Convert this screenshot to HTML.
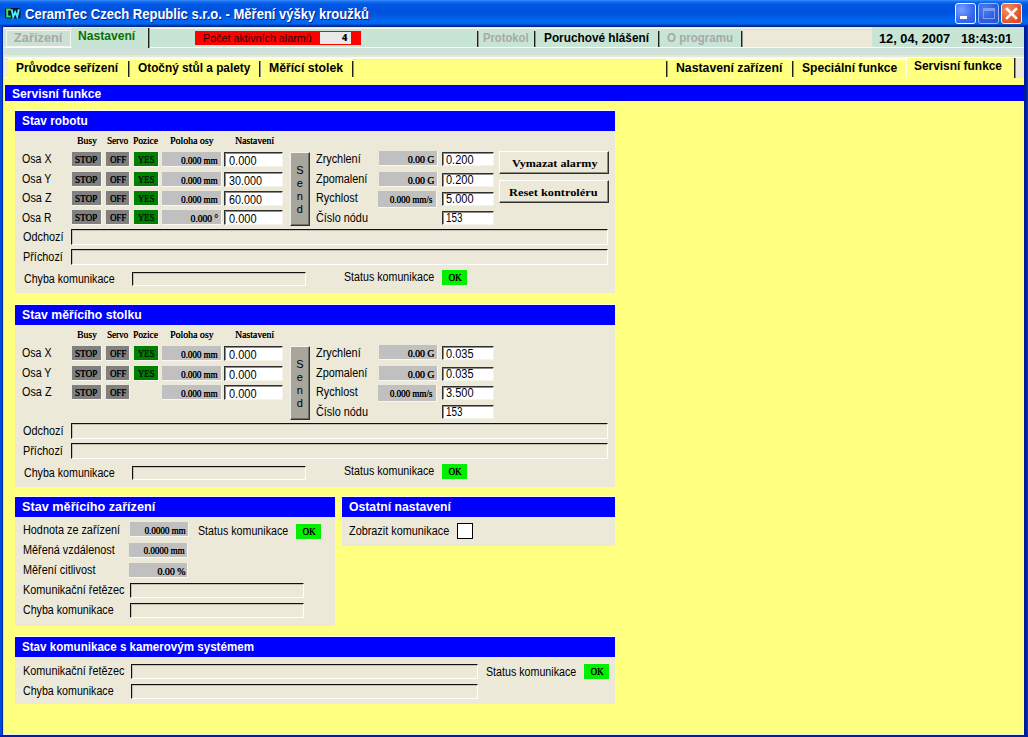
<!DOCTYPE html>
<html><head><meta charset="utf-8"><style>
html,body{margin:0;padding:0;}
body{width:1028px;height:737px;overflow:hidden;position:relative;font-family:"Liberation Sans",sans-serif;}
body>div,body>svg{position:absolute;}
.t{white-space:nowrap;}
</style></head><body>
<div style="left:0px;top:0px;width:1028px;height:737px;background:#0047D8;"></div>
<div style="left:0px;top:0px;width:1028px;height:27px;background:linear-gradient(#3A90FF 0px,#1A70F0 1.5px,#0058E4 4px,#0052DC 10px,#0054DE 14px,#0062EC 18px,#0068F4 21px,#0064F0 24px,#0044B8 25px,#00288C 26.5px,#00288C 27px);"></div>
<div style="left:0px;top:26px;width:2px;height:711px;background:#0048E0;"></div>
<div style="left:2px;top:26px;width:1px;height:711px;background:#0028A8;"></div>
<div style="left:3px;top:27px;width:1px;height:708px;background:#C8E4FF;"></div>
<div style="left:1024px;top:26px;width:4px;height:711px;background:#001C9C;"></div>
<div style="left:1027px;top:26px;width:1px;height:711px;background:#0838C0;"></div>
<div style="left:0px;top:735px;width:1028px;height:2px;background:#00209C;"></div>
<svg style="left:4px;top:7px;width:18px;height:13px" viewBox="4 7 18 13"><rect x="5" y="8" width="15.5" height="10.5" rx="2" fill="#00103A"/><path d="M10.8 9.6 H7.2 V16.6 H10.8" fill="none" stroke="#38E848" stroke-width="2"/><path d="M11.6 9.2 L13.2 16.8 L15.2 12.2 L17.2 16.8 L18.9 9.2" fill="none" stroke="#48F0F0" stroke-width="1.9"/></svg>
<div class="t" style="top:7.00px;font:bold 14px/14px 'Liberation Sans', sans-serif;color:#FFFFFF;left:25px;transform-origin:0 0;transform:scaleX(0.9314);text-shadow:1px 1px 0 #0A1E8C;">CeramTec Czech Republic s.r.o. - Měření výšky kroužků</div>
<div style="left:955px;top:3px;width:19px;height:19px;border:1px solid #F0F4FF;border-radius:3px;background:radial-gradient(circle at 30% 30%, #7AA0FF, #3868F0 60%, #2A58E4);"></div>
<div style="left:978px;top:3px;width:19px;height:19px;border:1px solid #9CB8F4;border-radius:3px;background:radial-gradient(circle at 30% 30%, #4C7EF0, #2E5BE0 60%, #2450D8);"></div>
<div style="left:1001px;top:3px;width:19px;height:19px;border:1px solid #F0F4FF;border-radius:3px;background:radial-gradient(circle at 30% 30%, #F0906A, #E5582E 60%, #D04010);"></div>
<div style="left:960px;top:16px;width:7px;height:3px;background:#fff;"></div>
<div style="left:983px;top:8px;width:12px;height:11px;border:1px solid #7BA0F0;border-top:3px solid #7BA0F0;box-sizing:border-box;"></div>
<svg style="left:1001px;top:3px;width:21px;height:21px" viewBox="0 0 21 21"><path d="M6 6 L15 15 M15 6 L6 15" stroke="#FFF" stroke-width="2.5" stroke-linecap="square"/></svg>
<div style="left:4px;top:27px;width:1020px;height:708px;background:#FFFF80;"></div>
<div style="left:4px;top:734px;width:1020px;height:1px;background:#E8F4F0;"></div>
<div style="left:1023px;top:102px;width:1px;height:633px;background:#F0F8E8;"></div>
<div style="left:4px;top:27px;width:1020px;height:31px;background:#C8E4D4;"></div>
<div style="left:4px;top:27px;width:1020px;height:1px;background:#E4E8F4;"></div>
<div style="left:4px;top:28px;width:1020px;height:1px;background:#F6F6F0;"></div>
<div style="left:4px;top:47px;width:1020px;height:1px;background:#F4FFF8;"></div>
<div style="left:4px;top:48px;width:1020px;height:5px;background:#D0E0DA;"></div>
<div style="left:4px;top:53px;width:1020px;height:2px;background:#CCE4D0;"></div>
<div style="left:4px;top:55px;width:1020px;height:2px;background:#E4EAD8;"></div>
<div style="left:4px;top:57px;width:1020px;height:2px;background:#FAFAEE;"></div>
<div style="left:6px;top:30px;width:65px;height:17px;border:1px solid #F4F8F0;box-sizing:border-box;background:#CCE0D4;"></div>
<div class="t" style="top:32.00px;font:bold 12px/12px 'Liberation Sans', sans-serif;color:#A8A8A8;left:13.8px;transform-origin:0 0;transform:scaleX(1.0670);">Zařízení</div>
<div style="left:72px;top:28px;width:77px;height:20px;background:#C8E4D4;"></div>
<div style="left:148px;top:28px;width:1px;height:20px;background:#202020;"></div>
<div style="left:149px;top:28px;width:1px;height:20px;background:#909090;"></div>
<div class="t" style="top:30.00px;font:bold 12px/12px 'Liberation Sans', sans-serif;color:#0A700A;left:78.4px;transform-origin:0 0;transform:scaleX(1.0088);">Nastavení</div>
<div style="left:195px;top:31px;width:166px;height:14px;background:#FF0000;"></div>
<div class="t" style="top:33.00px;font:11px/11px 'Liberation Sans', sans-serif;color:#300000;left:202.6px;transform-origin:0 0;transform:scaleX(0.9768);">Počet aktivních alarmů</div>
<div style="left:320px;top:32px;width:31px;height:12px;background:#E8E8E8;"></div>
<div class="t" style="top:33.00px;font:bold 10px/10px 'Liberation Serif', serif;color:#000;right:681px;transform-origin:100% 0;text-shadow:0.3px 0 0 #000;">4</div>
<div style="left:477px;top:31px;width:1px;height:16px;background:#202020;"></div>
<div style="left:478px;top:31px;width:1px;height:16px;background:#909090;"></div>
<div style="left:534px;top:31px;width:1px;height:16px;background:#202020;"></div>
<div style="left:535px;top:31px;width:1px;height:16px;background:#909090;"></div>
<div style="left:658px;top:31px;width:1px;height:16px;background:#202020;"></div>
<div style="left:659px;top:31px;width:1px;height:16px;background:#909090;"></div>
<div style="left:741px;top:31px;width:1px;height:16px;background:#202020;"></div>
<div style="left:742px;top:31px;width:1px;height:16px;background:#909090;"></div>
<div class="t" style="top:32.00px;font:bold 12px/12px 'Liberation Sans', sans-serif;color:#A8A8A8;left:483px;transform-origin:0 0;transform:scaleX(0.9348);">Protokol</div>
<div class="t" style="top:32.00px;font:bold 12px/12px 'Liberation Sans', sans-serif;color:#000;left:544px;transform-origin:0 0;transform:scaleX(0.9840);">Poruchové hlášení</div>
<div class="t" style="top:32.00px;font:bold 12px/12px 'Liberation Sans', sans-serif;color:#A8A8A8;left:667px;transform-origin:0 0;transform:scaleX(0.9611);">O programu</div>
<div style="left:743px;top:30px;width:129px;height:17px;background:#ECE9D8;"></div>
<div style="left:872px;top:27px;width:152px;height:20px;background:#C8E4D4;"></div>
<div class="t" style="top:33.00px;font:bold 12px/12px 'Liberation Sans', sans-serif;color:#000;left:878.8px;transform-origin:0 0;transform:scaleX(1.0676);">12, 04, 2007   18:43:01</div>
<div style="left:4px;top:59px;width:1020px;height:26px;background:#FFFF80;"></div>
<div style="left:4px;top:58px;width:4px;height:19px;background:#F0F0DC;"></div>
<div style="left:1016px;top:58px;width:8px;height:20px;background:#ECE9D8;"></div>
<div style="left:128px;top:61px;width:1px;height:17px;background:#202020;"></div>
<div style="left:129px;top:61px;width:1px;height:17px;background:#909090;"></div>
<div style="left:259px;top:61px;width:1px;height:17px;background:#202020;"></div>
<div style="left:260px;top:61px;width:1px;height:17px;background:#909090;"></div>
<div style="left:352px;top:61px;width:1px;height:17px;background:#202020;"></div>
<div style="left:353px;top:61px;width:1px;height:17px;background:#909090;"></div>
<div style="left:666px;top:61px;width:1px;height:17px;background:#202020;"></div>
<div style="left:667px;top:61px;width:1px;height:17px;background:#909090;"></div>
<div style="left:792px;top:61px;width:1px;height:17px;background:#202020;"></div>
<div style="left:793px;top:61px;width:1px;height:17px;background:#909090;"></div>
<div style="left:4px;top:59px;width:1020px;height:1px;background:#F0EAB8;"></div>
<div style="left:8px;top:59px;width:344px;height:1px;background:#FFFFE8;"></div>
<div style="left:666px;top:59px;width:350px;height:1px;background:#FFFFE8;"></div>
<div style="left:906px;top:57px;width:109px;height:21px;background:#FFFF80;border-left:1px solid #FFFFF0;border-top:1px solid #FFFFF0;box-sizing:border-box;"></div>
<div style="left:1014px;top:58px;width:1px;height:20px;background:#202020;"></div>
<div style="left:1015px;top:58px;width:1px;height:20px;background:#909090;"></div>
<div style="left:4px;top:77px;width:902px;height:1px;background:#FFFFE0;"></div>
<div class="t" style="top:62.00px;font:bold 12px/12px 'Liberation Sans', sans-serif;color:#000;left:15.7px;transform-origin:0 0;transform:scaleX(0.9930);">Průvodce seřízení</div>
<div class="t" style="top:62.00px;font:bold 12px/12px 'Liberation Sans', sans-serif;color:#000;left:137.7px;transform-origin:0 0;transform:scaleX(0.9848);">Otočný stůl a palety</div>
<div class="t" style="top:62.00px;font:bold 12px/12px 'Liberation Sans', sans-serif;color:#000;left:269px;transform-origin:0 0;transform:scaleX(1.0178);">Měřící stolek</div>
<div class="t" style="top:62.00px;font:bold 12px/12px 'Liberation Sans', sans-serif;color:#000;left:675.7px;transform-origin:0 0;transform:scaleX(1.0217);">Nastavení zařízení</div>
<div class="t" style="top:62.00px;font:bold 12px/12px 'Liberation Sans', sans-serif;color:#000;left:801.7px;transform-origin:0 0;transform:scaleX(1.0063);">Speciální funkce</div>
<div class="t" style="top:60.00px;font:bold 12px/12px 'Liberation Sans', sans-serif;color:#000;left:914px;transform-origin:0 0;transform:scaleX(0.9919);">Servisní funkce</div>
<div style="left:5px;top:85px;width:1019px;height:16px;background:#0000FF;"></div>
<div style="left:5px;top:101px;width:1019px;height:1px;background:#F0F0FF;"></div>
<div class="t" style="top:88.00px;font:bold 12px/12px 'Liberation Sans', sans-serif;color:#FFF;left:11.8px;transform-origin:0 0;transform:scaleX(1.0054);">Servisní funkce</div>
<div style="left:15px;top:110px;width:601px;height:1px;background:#FFFFF0;"></div>
<div style="left:15px;top:111px;width:600px;height:182px;background:#ECE9D8;"></div>
<div style="left:15px;top:111px;width:600px;height:20px;background:#0000FF;"></div>
<div style="left:15px;top:131px;width:600px;height:1px;background:#E8E8F8;"></div>
<div class="t" style="top:115.00px;font:bold 12px/12px 'Liberation Sans', sans-serif;color:#FFF;left:21.7px;transform-origin:0 0;transform:scaleX(0.9839);">Stav robotu</div>
<div class="t" style="top:136.00px;font:10px/10px 'Liberation Serif', serif;color:#000;left:77.2px;transform-origin:0 0;transform:scaleX(0.9629);text-shadow:0.2px 0 0 #000;">Busy</div>
<div class="t" style="top:136.00px;font:10px/10px 'Liberation Serif', serif;color:#000;left:106.5px;transform-origin:0 0;transform:scaleX(0.9039);text-shadow:0.2px 0 0 #000;">Servo</div>
<div class="t" style="top:136.00px;font:10px/10px 'Liberation Serif', serif;color:#000;left:133.2px;transform-origin:0 0;transform:scaleX(0.9341);text-shadow:0.2px 0 0 #000;">Pozice</div>
<div class="t" style="top:136.00px;font:10px/10px 'Liberation Serif', serif;color:#000;left:170px;transform-origin:0 0;transform:scaleX(0.9848);text-shadow:0.2px 0 0 #000;">Poloha osy</div>
<div class="t" style="top:136.00px;font:10px/10px 'Liberation Serif', serif;color:#000;left:235px;transform-origin:0 0;transform:scaleX(0.9750);text-shadow:0.2px 0 0 #000;">Nastavení</div>
<div class="t" style="top:153.00px;font:12px/12px 'Liberation Sans', sans-serif;color:#000;left:22.4px;transform-origin:0 0;transform:scaleX(0.8843);">Osa X</div>
<div style="left:72px;top:152px;width:30px;height:15px;background:#808080;border-right:1px solid #F8F8F0;border-bottom:1px solid #F8F8F0;box-sizing:border-box;"></div>
<div class="t" style="top:155.00px;font:10px/10px 'Liberation Serif', serif;color:#000;left:86.2px;transform-origin:50% 0;transform:scaleX(0.9184);width:0;display:flex;justify-content:center;text-shadow:0.35px 0 0 #000;">STOP</div>
<div style="left:106px;top:152px;width:24px;height:15px;background:#808080;border-right:1px solid #F8F8F0;border-bottom:1px solid #F8F8F0;box-sizing:border-box;"></div>
<div class="t" style="top:155.00px;font:10px/10px 'Liberation Serif', serif;color:#000;left:118px;transform-origin:50% 0;transform:scaleX(0.8824);width:0;display:flex;justify-content:center;text-shadow:0.35px 0 0 #000;">OFF</div>
<div style="left:134px;top:152px;width:25px;height:15px;background:#008000;border-right:1px solid #F8F8F0;border-bottom:1px solid #F8F8F0;box-sizing:border-box;"></div>
<div class="t" style="top:155.00px;font:10px/10px 'Liberation Serif', serif;color:#002000;left:146.1px;transform-origin:50% 0;transform:scaleX(0.8780);width:0;display:flex;justify-content:center;text-shadow:0.35px 0 0 #000;">YES</div>
<div style="left:162px;top:152px;width:60px;height:15px;background:#C0C0C0;border-right:1px solid #F8F8F0;border-bottom:1px solid #F8F8F0;box-sizing:border-box;"></div>
<div class="t" style="top:156.00px;font:10px/10px 'Liberation Serif', serif;color:#000;right:810.5px;transform-origin:100% 0;transform:scaleX(0.8998);text-shadow:0.3px 0 0 #000;">0.000 mm</div>
<div style="left:224px;top:152px;width:59px;height:15px;background:#FFF;border-top:1px solid #303030;border-left:1px solid #303030;border-right:1px solid #F4F4EC;border-bottom:1px solid #F4F4EC;box-sizing:border-box;box-shadow:inset 1px 1px 0 #8C8C8C;"></div>
<div class="t" style="top:155.00px;font:12px/12px 'Liberation Sans', sans-serif;color:#000;left:228.5px;transform-origin:0 0;transform:scaleX(0.9157);">0.000</div>
<div class="t" style="top:173.00px;font:12px/12px 'Liberation Sans', sans-serif;color:#000;left:22.4px;transform-origin:0 0;transform:scaleX(0.8901);">Osa Y</div>
<div style="left:72px;top:172px;width:30px;height:15px;background:#808080;border-right:1px solid #F8F8F0;border-bottom:1px solid #F8F8F0;box-sizing:border-box;"></div>
<div class="t" style="top:175.00px;font:10px/10px 'Liberation Serif', serif;color:#000;left:86.2px;transform-origin:50% 0;transform:scaleX(0.9184);width:0;display:flex;justify-content:center;text-shadow:0.35px 0 0 #000;">STOP</div>
<div style="left:106px;top:172px;width:24px;height:15px;background:#808080;border-right:1px solid #F8F8F0;border-bottom:1px solid #F8F8F0;box-sizing:border-box;"></div>
<div class="t" style="top:175.00px;font:10px/10px 'Liberation Serif', serif;color:#000;left:118px;transform-origin:50% 0;transform:scaleX(0.8824);width:0;display:flex;justify-content:center;text-shadow:0.35px 0 0 #000;">OFF</div>
<div style="left:134px;top:172px;width:25px;height:15px;background:#008000;border-right:1px solid #F8F8F0;border-bottom:1px solid #F8F8F0;box-sizing:border-box;"></div>
<div class="t" style="top:175.00px;font:10px/10px 'Liberation Serif', serif;color:#002000;left:146.1px;transform-origin:50% 0;transform:scaleX(0.8780);width:0;display:flex;justify-content:center;text-shadow:0.35px 0 0 #000;">YES</div>
<div style="left:162px;top:172px;width:60px;height:15px;background:#C0C0C0;border-right:1px solid #F8F8F0;border-bottom:1px solid #F8F8F0;box-sizing:border-box;"></div>
<div class="t" style="top:176.00px;font:10px/10px 'Liberation Serif', serif;color:#000;right:810.5px;transform-origin:100% 0;transform:scaleX(0.8998);text-shadow:0.3px 0 0 #000;">0.000 mm</div>
<div style="left:224px;top:172px;width:59px;height:15px;background:#FFF;border-top:1px solid #303030;border-left:1px solid #303030;border-right:1px solid #F4F4EC;border-bottom:1px solid #F4F4EC;box-sizing:border-box;box-shadow:inset 1px 1px 0 #8C8C8C;"></div>
<div class="t" style="top:175.00px;font:12px/12px 'Liberation Sans', sans-serif;color:#000;left:228.5px;transform-origin:0 0;transform:scaleX(0.8991);">30.000</div>
<div class="t" style="top:192.00px;font:12px/12px 'Liberation Sans', sans-serif;color:#000;left:22.4px;transform-origin:0 0;transform:scaleX(0.9029);">Osa Z</div>
<div style="left:72px;top:191px;width:30px;height:15px;background:#808080;border-right:1px solid #F8F8F0;border-bottom:1px solid #F8F8F0;box-sizing:border-box;"></div>
<div class="t" style="top:194.00px;font:10px/10px 'Liberation Serif', serif;color:#000;left:86.2px;transform-origin:50% 0;transform:scaleX(0.9184);width:0;display:flex;justify-content:center;text-shadow:0.35px 0 0 #000;">STOP</div>
<div style="left:106px;top:191px;width:24px;height:15px;background:#808080;border-right:1px solid #F8F8F0;border-bottom:1px solid #F8F8F0;box-sizing:border-box;"></div>
<div class="t" style="top:194.00px;font:10px/10px 'Liberation Serif', serif;color:#000;left:118px;transform-origin:50% 0;transform:scaleX(0.8824);width:0;display:flex;justify-content:center;text-shadow:0.35px 0 0 #000;">OFF</div>
<div style="left:134px;top:191px;width:25px;height:15px;background:#008000;border-right:1px solid #F8F8F0;border-bottom:1px solid #F8F8F0;box-sizing:border-box;"></div>
<div class="t" style="top:194.00px;font:10px/10px 'Liberation Serif', serif;color:#002000;left:146.1px;transform-origin:50% 0;transform:scaleX(0.8780);width:0;display:flex;justify-content:center;text-shadow:0.35px 0 0 #000;">YES</div>
<div style="left:162px;top:191px;width:60px;height:15px;background:#C0C0C0;border-right:1px solid #F8F8F0;border-bottom:1px solid #F8F8F0;box-sizing:border-box;"></div>
<div class="t" style="top:195.00px;font:10px/10px 'Liberation Serif', serif;color:#000;right:810.5px;transform-origin:100% 0;transform:scaleX(0.8998);text-shadow:0.3px 0 0 #000;">0.000 mm</div>
<div style="left:224px;top:191px;width:59px;height:15px;background:#FFF;border-top:1px solid #303030;border-left:1px solid #303030;border-right:1px solid #F4F4EC;border-bottom:1px solid #F4F4EC;box-sizing:border-box;box-shadow:inset 1px 1px 0 #8C8C8C;"></div>
<div class="t" style="top:194.00px;font:12px/12px 'Liberation Sans', sans-serif;color:#000;left:228.5px;transform-origin:0 0;transform:scaleX(0.8991);">60.000</div>
<div class="t" style="top:212.00px;font:12px/12px 'Liberation Sans', sans-serif;color:#000;left:22.4px;transform-origin:0 0;transform:scaleX(0.8672);">Osa R</div>
<div style="left:72px;top:210px;width:30px;height:15px;background:#808080;border-right:1px solid #F8F8F0;border-bottom:1px solid #F8F8F0;box-sizing:border-box;"></div>
<div class="t" style="top:213.00px;font:10px/10px 'Liberation Serif', serif;color:#000;left:86.2px;transform-origin:50% 0;transform:scaleX(0.9184);width:0;display:flex;justify-content:center;text-shadow:0.35px 0 0 #000;">STOP</div>
<div style="left:106px;top:210px;width:24px;height:15px;background:#808080;border-right:1px solid #F8F8F0;border-bottom:1px solid #F8F8F0;box-sizing:border-box;"></div>
<div class="t" style="top:213.00px;font:10px/10px 'Liberation Serif', serif;color:#000;left:118px;transform-origin:50% 0;transform:scaleX(0.8824);width:0;display:flex;justify-content:center;text-shadow:0.35px 0 0 #000;">OFF</div>
<div style="left:134px;top:210px;width:25px;height:15px;background:#008000;border-right:1px solid #F8F8F0;border-bottom:1px solid #F8F8F0;box-sizing:border-box;"></div>
<div class="t" style="top:213.00px;font:10px/10px 'Liberation Serif', serif;color:#002000;left:146.1px;transform-origin:50% 0;transform:scaleX(0.8780);width:0;display:flex;justify-content:center;text-shadow:0.35px 0 0 #000;">YES</div>
<div style="left:162px;top:210px;width:60px;height:15px;background:#C0C0C0;border-right:1px solid #F8F8F0;border-bottom:1px solid #F8F8F0;box-sizing:border-box;"></div>
<div class="t" style="top:214.00px;font:10px/10px 'Liberation Serif', serif;color:#000;right:810.5px;transform-origin:100% 0;transform:scaleX(0.9483);text-shadow:0.3px 0 0 #000;">0.000 °</div>
<div style="left:224px;top:210px;width:59px;height:15px;background:#FFF;border-top:1px solid #303030;border-left:1px solid #303030;border-right:1px solid #F4F4EC;border-bottom:1px solid #F4F4EC;box-sizing:border-box;box-shadow:inset 1px 1px 0 #8C8C8C;"></div>
<div class="t" style="top:213.00px;font:12px/12px 'Liberation Sans', sans-serif;color:#000;left:228.5px;transform-origin:0 0;transform:scaleX(0.9157);">0.000</div>
<div style="left:290px;top:152px;width:20px;height:74px;background:#A8A69C;border-top:1px solid #F4F4F0;border-left:1px solid #F4F4F0;border-right:1px solid #303030;border-bottom:1px solid #303030;box-sizing:border-box;box-shadow:inset -1px -1px 0 #707068;"></div>
<div class="t" style="top:165.00px;font:11px/11px 'Liberation Sans', sans-serif;color:#000;left:299.8px;transform-origin:50% 0;width:0;display:flex;justify-content:center;">S</div>
<div class="t" style="top:178.00px;font:11px/11px 'Liberation Sans', sans-serif;color:#000;left:299.8px;transform-origin:50% 0;width:0;display:flex;justify-content:center;">e</div>
<div class="t" style="top:191.00px;font:11px/11px 'Liberation Sans', sans-serif;color:#000;left:299.8px;transform-origin:50% 0;width:0;display:flex;justify-content:center;">n</div>
<div class="t" style="top:204.00px;font:11px/11px 'Liberation Sans', sans-serif;color:#000;left:299.8px;transform-origin:50% 0;width:0;display:flex;justify-content:center;">d</div>
<div class="t" style="top:153.00px;font:12px/12px 'Liberation Sans', sans-serif;color:#000;left:315.8px;transform-origin:0 0;transform:scaleX(0.905);">Zrychlení</div>
<div style="left:379px;top:151px;width:59px;height:15px;background:#C0C0C0;border-right:1px solid #F8F8F0;border-bottom:1px solid #F8F8F0;box-sizing:border-box;"></div>
<div class="t" style="top:155.00px;font:10px/10px 'Liberation Serif', serif;color:#000;right:594px;transform-origin:100% 0;transform:scaleX(0.9767);text-shadow:0.3px 0 0 #000;">0.00 G</div>
<div style="left:442px;top:152px;width:52px;height:14px;background:#FFF;border-top:1px solid #303030;border-left:1px solid #303030;border-right:1px solid #F4F4EC;border-bottom:1px solid #F4F4EC;box-sizing:border-box;box-shadow:inset 1px 1px 0 #8C8C8C;"></div>
<div class="t" style="top:154.00px;font:12px/12px 'Liberation Sans', sans-serif;color:#000;left:445.8px;transform-origin:0 0;transform:scaleX(0.9157);">0.200</div>
<div class="t" style="top:173.00px;font:12px/12px 'Liberation Sans', sans-serif;color:#000;left:315.8px;transform-origin:0 0;transform:scaleX(0.905);">Zpomalení</div>
<div style="left:379px;top:172px;width:59px;height:15px;background:#C0C0C0;border-right:1px solid #F8F8F0;border-bottom:1px solid #F8F8F0;box-sizing:border-box;"></div>
<div class="t" style="top:176.00px;font:10px/10px 'Liberation Serif', serif;color:#000;right:594px;transform-origin:100% 0;transform:scaleX(0.9767);text-shadow:0.3px 0 0 #000;">0.00 G</div>
<div style="left:442px;top:173px;width:52px;height:14px;background:#FFF;border-top:1px solid #303030;border-left:1px solid #303030;border-right:1px solid #F4F4EC;border-bottom:1px solid #F4F4EC;box-sizing:border-box;box-shadow:inset 1px 1px 0 #8C8C8C;"></div>
<div class="t" style="top:174.00px;font:12px/12px 'Liberation Sans', sans-serif;color:#000;left:445.8px;transform-origin:0 0;transform:scaleX(0.9157);">0.200</div>
<div class="t" style="top:192.00px;font:12px/12px 'Liberation Sans', sans-serif;color:#000;left:315.8px;transform-origin:0 0;transform:scaleX(0.905);">Rychlost</div>
<div style="left:378px;top:191px;width:59px;height:17px;background:#C0C0C0;border-right:1px solid #F8F8F0;border-bottom:1px solid #F8F8F0;box-sizing:border-box;"></div>
<div class="t" style="top:195.00px;font:10px/10px 'Liberation Serif', serif;color:#000;right:595.7px;transform-origin:100% 0;transform:scaleX(0.8998);text-shadow:0.3px 0 0 #000;">0.000 mm/s</div>
<div style="left:442px;top:192px;width:52px;height:14px;background:#FFF;border-top:1px solid #303030;border-left:1px solid #303030;border-right:1px solid #F4F4EC;border-bottom:1px solid #F4F4EC;box-sizing:border-box;box-shadow:inset 1px 1px 0 #8C8C8C;"></div>
<div class="t" style="top:193.00px;font:12px/12px 'Liberation Sans', sans-serif;color:#000;left:445.8px;transform-origin:0 0;transform:scaleX(0.9157);">5.000</div>
<div class="t" style="top:212.00px;font:12px/12px 'Liberation Sans', sans-serif;color:#000;left:315.8px;transform-origin:0 0;transform:scaleX(0.905);">Číslo nódu</div>
<div style="left:442px;top:211px;width:52px;height:14px;background:#FFF;border-top:1px solid #303030;border-left:1px solid #303030;border-right:1px solid #F4F4EC;border-bottom:1px solid #F4F4EC;box-sizing:border-box;box-shadow:inset 1px 1px 0 #8C8C8C;"></div>
<div class="t" style="top:212.00px;font:12px/12px 'Liberation Sans', sans-serif;color:#000;left:445.8px;transform-origin:0 0;transform:scaleX(0.8237);">153</div>
<div class="t" style="top:231.00px;font:12px/12px 'Liberation Sans', sans-serif;color:#000;left:22.5px;transform-origin:0 0;transform:scaleX(0.905);">Odchozí</div>
<div style="left:71px;top:229px;width:537px;height:16px;background:#ECE9D8;border-top:1px solid #101010;border-left:1px solid #101010;border-right:1px solid #FFFFFF;border-bottom:1px solid #FFFFFF;box-sizing:border-box;box-shadow:inset 1px 1px 0 #C0C0B8;"></div>
<div class="t" style="top:251.00px;font:12px/12px 'Liberation Sans', sans-serif;color:#000;left:22.5px;transform-origin:0 0;transform:scaleX(0.905);">Příchozí</div>
<div style="left:71px;top:249px;width:537px;height:16px;background:#ECE9D8;border-top:1px solid #101010;border-left:1px solid #101010;border-right:1px solid #FFFFFF;border-bottom:1px solid #FFFFFF;box-sizing:border-box;box-shadow:inset 1px 1px 0 #C0C0B8;"></div>
<div class="t" style="top:273.00px;font:12px/12px 'Liberation Sans', sans-serif;color:#000;left:23.6px;transform-origin:0 0;transform:scaleX(0.8877);">Chyba komunikace</div>
<div style="left:132px;top:272px;width:174px;height:14px;background:#ECE9D8;border-top:1px solid #101010;border-left:1px solid #101010;border-right:1px solid #FFFFFF;border-bottom:1px solid #FFFFFF;box-sizing:border-box;box-shadow:inset 1px 1px 0 #C0C0B8;"></div>
<div class="t" style="top:271.00px;font:12px/12px 'Liberation Sans', sans-serif;color:#000;left:343.8px;transform-origin:0 0;transform:scaleX(0.8896);">Status komunikace</div>
<div style="left:442px;top:270px;width:25px;height:15px;background:#00F000;"></div>
<div class="t" style="top:273.00px;font:10px/10px 'Liberation Serif', serif;color:#000;left:454.5px;transform-origin:50% 0;transform:scaleX(0.8995);width:0;display:flex;justify-content:center;text-shadow:0.35px 0 0 #000;">OK</div>
<div style="left:499px;top:151px;width:110px;height:23px;background:#ECE9D8;border-top:1px solid #FFF;border-left:1px solid #FFF;border-right:1px solid #303030;border-bottom:1px solid #303030;box-sizing:border-box;box-shadow:inset -1px -1px 0 #8C8C84;"></div>
<div class="t" style="top:158.00px;font:bold 11px/11px 'Liberation Serif', serif;color:#000;left:511.5px;transform-origin:0 0;transform:scaleX(1.1032);">Vymazat alarmy</div>
<div style="left:499px;top:180px;width:110px;height:23px;background:#ECE9D8;border-top:1px solid #FFF;border-left:1px solid #FFF;border-right:1px solid #303030;border-bottom:1px solid #303030;box-sizing:border-box;box-shadow:inset -1px -1px 0 #8C8C84;"></div>
<div class="t" style="top:187.00px;font:bold 11px/11px 'Liberation Serif', serif;color:#000;left:509px;transform-origin:0 0;transform:scaleX(1.1224);">Reset kontroléru</div>
<div style="left:15px;top:304px;width:601px;height:1px;background:#FFFFF0;"></div>
<div style="left:15px;top:305px;width:600px;height:182px;background:#ECE9D8;"></div>
<div style="left:15px;top:305px;width:600px;height:20px;background:#0000FF;"></div>
<div style="left:15px;top:325px;width:600px;height:1px;background:#E8E8F8;"></div>
<div class="t" style="top:309.00px;font:bold 12px/12px 'Liberation Sans', sans-serif;color:#FFF;left:21.7px;transform-origin:0 0;transform:scaleX(1.0207);">Stav měřícího stolku</div>
<div class="t" style="top:330.00px;font:10px/10px 'Liberation Serif', serif;color:#000;left:77.2px;transform-origin:0 0;transform:scaleX(0.9629);text-shadow:0.2px 0 0 #000;">Busy</div>
<div class="t" style="top:330.00px;font:10px/10px 'Liberation Serif', serif;color:#000;left:106.5px;transform-origin:0 0;transform:scaleX(0.9039);text-shadow:0.2px 0 0 #000;">Servo</div>
<div class="t" style="top:330.00px;font:10px/10px 'Liberation Serif', serif;color:#000;left:133.2px;transform-origin:0 0;transform:scaleX(0.9341);text-shadow:0.2px 0 0 #000;">Pozice</div>
<div class="t" style="top:330.00px;font:10px/10px 'Liberation Serif', serif;color:#000;left:170px;transform-origin:0 0;transform:scaleX(0.9848);text-shadow:0.2px 0 0 #000;">Poloha osy</div>
<div class="t" style="top:330.00px;font:10px/10px 'Liberation Serif', serif;color:#000;left:235px;transform-origin:0 0;transform:scaleX(0.9750);text-shadow:0.2px 0 0 #000;">Nastavení</div>
<div class="t" style="top:347.00px;font:12px/12px 'Liberation Sans', sans-serif;color:#000;left:22.4px;transform-origin:0 0;transform:scaleX(0.8843);">Osa X</div>
<div style="left:72px;top:346px;width:30px;height:15px;background:#808080;border-right:1px solid #F8F8F0;border-bottom:1px solid #F8F8F0;box-sizing:border-box;"></div>
<div class="t" style="top:349.00px;font:10px/10px 'Liberation Serif', serif;color:#000;left:86.2px;transform-origin:50% 0;transform:scaleX(0.9184);width:0;display:flex;justify-content:center;text-shadow:0.35px 0 0 #000;">STOP</div>
<div style="left:106px;top:346px;width:24px;height:15px;background:#808080;border-right:1px solid #F8F8F0;border-bottom:1px solid #F8F8F0;box-sizing:border-box;"></div>
<div class="t" style="top:349.00px;font:10px/10px 'Liberation Serif', serif;color:#000;left:118px;transform-origin:50% 0;transform:scaleX(0.8824);width:0;display:flex;justify-content:center;text-shadow:0.35px 0 0 #000;">OFF</div>
<div style="left:134px;top:346px;width:25px;height:15px;background:#008000;border-right:1px solid #F8F8F0;border-bottom:1px solid #F8F8F0;box-sizing:border-box;"></div>
<div class="t" style="top:349.00px;font:10px/10px 'Liberation Serif', serif;color:#002000;left:146.1px;transform-origin:50% 0;transform:scaleX(0.8780);width:0;display:flex;justify-content:center;text-shadow:0.35px 0 0 #000;">YES</div>
<div style="left:162px;top:346px;width:60px;height:15px;background:#C0C0C0;border-right:1px solid #F8F8F0;border-bottom:1px solid #F8F8F0;box-sizing:border-box;"></div>
<div class="t" style="top:350.00px;font:10px/10px 'Liberation Serif', serif;color:#000;right:810.5px;transform-origin:100% 0;transform:scaleX(0.8998);text-shadow:0.3px 0 0 #000;">0.000 mm</div>
<div style="left:224px;top:346px;width:59px;height:15px;background:#FFF;border-top:1px solid #303030;border-left:1px solid #303030;border-right:1px solid #F4F4EC;border-bottom:1px solid #F4F4EC;box-sizing:border-box;box-shadow:inset 1px 1px 0 #8C8C8C;"></div>
<div class="t" style="top:349.00px;font:12px/12px 'Liberation Sans', sans-serif;color:#000;left:228.5px;transform-origin:0 0;transform:scaleX(0.9157);">0.000</div>
<div class="t" style="top:367.00px;font:12px/12px 'Liberation Sans', sans-serif;color:#000;left:22.4px;transform-origin:0 0;transform:scaleX(0.8901);">Osa Y</div>
<div style="left:72px;top:366px;width:30px;height:15px;background:#808080;border-right:1px solid #F8F8F0;border-bottom:1px solid #F8F8F0;box-sizing:border-box;"></div>
<div class="t" style="top:369.00px;font:10px/10px 'Liberation Serif', serif;color:#000;left:86.2px;transform-origin:50% 0;transform:scaleX(0.9184);width:0;display:flex;justify-content:center;text-shadow:0.35px 0 0 #000;">STOP</div>
<div style="left:106px;top:366px;width:24px;height:15px;background:#808080;border-right:1px solid #F8F8F0;border-bottom:1px solid #F8F8F0;box-sizing:border-box;"></div>
<div class="t" style="top:369.00px;font:10px/10px 'Liberation Serif', serif;color:#000;left:118px;transform-origin:50% 0;transform:scaleX(0.8824);width:0;display:flex;justify-content:center;text-shadow:0.35px 0 0 #000;">OFF</div>
<div style="left:134px;top:366px;width:25px;height:15px;background:#008000;border-right:1px solid #F8F8F0;border-bottom:1px solid #F8F8F0;box-sizing:border-box;"></div>
<div class="t" style="top:369.00px;font:10px/10px 'Liberation Serif', serif;color:#002000;left:146.1px;transform-origin:50% 0;transform:scaleX(0.8780);width:0;display:flex;justify-content:center;text-shadow:0.35px 0 0 #000;">YES</div>
<div style="left:162px;top:366px;width:60px;height:15px;background:#C0C0C0;border-right:1px solid #F8F8F0;border-bottom:1px solid #F8F8F0;box-sizing:border-box;"></div>
<div class="t" style="top:370.00px;font:10px/10px 'Liberation Serif', serif;color:#000;right:810.5px;transform-origin:100% 0;transform:scaleX(0.8998);text-shadow:0.3px 0 0 #000;">0.000 mm</div>
<div style="left:224px;top:366px;width:59px;height:15px;background:#FFF;border-top:1px solid #303030;border-left:1px solid #303030;border-right:1px solid #F4F4EC;border-bottom:1px solid #F4F4EC;box-sizing:border-box;box-shadow:inset 1px 1px 0 #8C8C8C;"></div>
<div class="t" style="top:369.00px;font:12px/12px 'Liberation Sans', sans-serif;color:#000;left:228.5px;transform-origin:0 0;transform:scaleX(0.9157);">0.000</div>
<div class="t" style="top:386.00px;font:12px/12px 'Liberation Sans', sans-serif;color:#000;left:22.4px;transform-origin:0 0;transform:scaleX(0.9029);">Osa Z</div>
<div style="left:72px;top:385px;width:30px;height:15px;background:#808080;border-right:1px solid #F8F8F0;border-bottom:1px solid #F8F8F0;box-sizing:border-box;"></div>
<div class="t" style="top:388.00px;font:10px/10px 'Liberation Serif', serif;color:#000;left:86.2px;transform-origin:50% 0;transform:scaleX(0.9184);width:0;display:flex;justify-content:center;text-shadow:0.35px 0 0 #000;">STOP</div>
<div style="left:106px;top:385px;width:24px;height:15px;background:#808080;border-right:1px solid #F8F8F0;border-bottom:1px solid #F8F8F0;box-sizing:border-box;"></div>
<div class="t" style="top:388.00px;font:10px/10px 'Liberation Serif', serif;color:#000;left:118px;transform-origin:50% 0;transform:scaleX(0.8824);width:0;display:flex;justify-content:center;text-shadow:0.35px 0 0 #000;">OFF</div>
<div style="left:162px;top:385px;width:60px;height:15px;background:#C0C0C0;border-right:1px solid #F8F8F0;border-bottom:1px solid #F8F8F0;box-sizing:border-box;"></div>
<div class="t" style="top:389.00px;font:10px/10px 'Liberation Serif', serif;color:#000;right:810.5px;transform-origin:100% 0;transform:scaleX(0.8998);text-shadow:0.3px 0 0 #000;">0.000 mm</div>
<div style="left:224px;top:385px;width:59px;height:15px;background:#FFF;border-top:1px solid #303030;border-left:1px solid #303030;border-right:1px solid #F4F4EC;border-bottom:1px solid #F4F4EC;box-sizing:border-box;box-shadow:inset 1px 1px 0 #8C8C8C;"></div>
<div class="t" style="top:388.00px;font:12px/12px 'Liberation Sans', sans-serif;color:#000;left:228.5px;transform-origin:0 0;transform:scaleX(0.9157);">0.000</div>
<div style="left:290px;top:346px;width:20px;height:74px;background:#A8A69C;border-top:1px solid #F4F4F0;border-left:1px solid #F4F4F0;border-right:1px solid #303030;border-bottom:1px solid #303030;box-sizing:border-box;box-shadow:inset -1px -1px 0 #707068;"></div>
<div class="t" style="top:359.00px;font:11px/11px 'Liberation Sans', sans-serif;color:#000;left:299.8px;transform-origin:50% 0;width:0;display:flex;justify-content:center;">S</div>
<div class="t" style="top:372.00px;font:11px/11px 'Liberation Sans', sans-serif;color:#000;left:299.8px;transform-origin:50% 0;width:0;display:flex;justify-content:center;">e</div>
<div class="t" style="top:385.00px;font:11px/11px 'Liberation Sans', sans-serif;color:#000;left:299.8px;transform-origin:50% 0;width:0;display:flex;justify-content:center;">n</div>
<div class="t" style="top:398.00px;font:11px/11px 'Liberation Sans', sans-serif;color:#000;left:299.8px;transform-origin:50% 0;width:0;display:flex;justify-content:center;">d</div>
<div class="t" style="top:347.00px;font:12px/12px 'Liberation Sans', sans-serif;color:#000;left:315.8px;transform-origin:0 0;transform:scaleX(0.905);">Zrychlení</div>
<div style="left:379px;top:345px;width:59px;height:15px;background:#C0C0C0;border-right:1px solid #F8F8F0;border-bottom:1px solid #F8F8F0;box-sizing:border-box;"></div>
<div class="t" style="top:349.00px;font:10px/10px 'Liberation Serif', serif;color:#000;right:594px;transform-origin:100% 0;transform:scaleX(0.9767);text-shadow:0.3px 0 0 #000;">0.00 G</div>
<div style="left:442px;top:346px;width:52px;height:14px;background:#FFF;border-top:1px solid #303030;border-left:1px solid #303030;border-right:1px solid #F4F4EC;border-bottom:1px solid #F4F4EC;box-sizing:border-box;box-shadow:inset 1px 1px 0 #8C8C8C;"></div>
<div class="t" style="top:348.00px;font:12px/12px 'Liberation Sans', sans-serif;color:#000;left:445.8px;transform-origin:0 0;transform:scaleX(0.9157);">0.035</div>
<div class="t" style="top:367.00px;font:12px/12px 'Liberation Sans', sans-serif;color:#000;left:315.8px;transform-origin:0 0;transform:scaleX(0.905);">Zpomalení</div>
<div style="left:379px;top:366px;width:59px;height:15px;background:#C0C0C0;border-right:1px solid #F8F8F0;border-bottom:1px solid #F8F8F0;box-sizing:border-box;"></div>
<div class="t" style="top:370.00px;font:10px/10px 'Liberation Serif', serif;color:#000;right:594px;transform-origin:100% 0;transform:scaleX(0.9767);text-shadow:0.3px 0 0 #000;">0.00 G</div>
<div style="left:442px;top:367px;width:52px;height:14px;background:#FFF;border-top:1px solid #303030;border-left:1px solid #303030;border-right:1px solid #F4F4EC;border-bottom:1px solid #F4F4EC;box-sizing:border-box;box-shadow:inset 1px 1px 0 #8C8C8C;"></div>
<div class="t" style="top:368.00px;font:12px/12px 'Liberation Sans', sans-serif;color:#000;left:445.8px;transform-origin:0 0;transform:scaleX(0.9157);">0.035</div>
<div class="t" style="top:386.00px;font:12px/12px 'Liberation Sans', sans-serif;color:#000;left:315.8px;transform-origin:0 0;transform:scaleX(0.905);">Rychlost</div>
<div style="left:378px;top:385px;width:59px;height:17px;background:#C0C0C0;border-right:1px solid #F8F8F0;border-bottom:1px solid #F8F8F0;box-sizing:border-box;"></div>
<div class="t" style="top:389.00px;font:10px/10px 'Liberation Serif', serif;color:#000;right:595.7px;transform-origin:100% 0;transform:scaleX(0.8998);text-shadow:0.3px 0 0 #000;">0.000 mm/s</div>
<div style="left:442px;top:386px;width:52px;height:14px;background:#FFF;border-top:1px solid #303030;border-left:1px solid #303030;border-right:1px solid #F4F4EC;border-bottom:1px solid #F4F4EC;box-sizing:border-box;box-shadow:inset 1px 1px 0 #8C8C8C;"></div>
<div class="t" style="top:387.00px;font:12px/12px 'Liberation Sans', sans-serif;color:#000;left:445.8px;transform-origin:0 0;transform:scaleX(0.9157);">3.500</div>
<div class="t" style="top:406.00px;font:12px/12px 'Liberation Sans', sans-serif;color:#000;left:315.8px;transform-origin:0 0;transform:scaleX(0.905);">Číslo nódu</div>
<div style="left:442px;top:405px;width:52px;height:14px;background:#FFF;border-top:1px solid #303030;border-left:1px solid #303030;border-right:1px solid #F4F4EC;border-bottom:1px solid #F4F4EC;box-sizing:border-box;box-shadow:inset 1px 1px 0 #8C8C8C;"></div>
<div class="t" style="top:406.00px;font:12px/12px 'Liberation Sans', sans-serif;color:#000;left:445.8px;transform-origin:0 0;transform:scaleX(0.8237);">153</div>
<div class="t" style="top:425.00px;font:12px/12px 'Liberation Sans', sans-serif;color:#000;left:22.5px;transform-origin:0 0;transform:scaleX(0.905);">Odchozí</div>
<div style="left:71px;top:423px;width:537px;height:16px;background:#ECE9D8;border-top:1px solid #101010;border-left:1px solid #101010;border-right:1px solid #FFFFFF;border-bottom:1px solid #FFFFFF;box-sizing:border-box;box-shadow:inset 1px 1px 0 #C0C0B8;"></div>
<div class="t" style="top:445.00px;font:12px/12px 'Liberation Sans', sans-serif;color:#000;left:22.5px;transform-origin:0 0;transform:scaleX(0.905);">Příchozí</div>
<div style="left:71px;top:443px;width:537px;height:16px;background:#ECE9D8;border-top:1px solid #101010;border-left:1px solid #101010;border-right:1px solid #FFFFFF;border-bottom:1px solid #FFFFFF;box-sizing:border-box;box-shadow:inset 1px 1px 0 #C0C0B8;"></div>
<div class="t" style="top:467.00px;font:12px/12px 'Liberation Sans', sans-serif;color:#000;left:23.6px;transform-origin:0 0;transform:scaleX(0.8877);">Chyba komunikace</div>
<div style="left:132px;top:466px;width:174px;height:14px;background:#ECE9D8;border-top:1px solid #101010;border-left:1px solid #101010;border-right:1px solid #FFFFFF;border-bottom:1px solid #FFFFFF;box-sizing:border-box;box-shadow:inset 1px 1px 0 #C0C0B8;"></div>
<div class="t" style="top:465.00px;font:12px/12px 'Liberation Sans', sans-serif;color:#000;left:343.8px;transform-origin:0 0;transform:scaleX(0.8896);">Status komunikace</div>
<div style="left:442px;top:464px;width:25px;height:15px;background:#00F000;"></div>
<div class="t" style="top:467.00px;font:10px/10px 'Liberation Serif', serif;color:#000;left:454.5px;transform-origin:50% 0;transform:scaleX(0.8995);width:0;display:flex;justify-content:center;text-shadow:0.35px 0 0 #000;">OK</div>
<div style="left:15px;top:496px;width:321px;height:1px;background:#FFFFF0;"></div>
<div style="left:15px;top:497px;width:320px;height:129px;background:#ECE9D8;"></div>
<div style="left:15px;top:497px;width:320px;height:20px;background:#0000FF;"></div>
<div style="left:15px;top:517px;width:320px;height:1px;background:#E8E8F8;"></div>
<div class="t" style="top:501.00px;font:bold 12px/12px 'Liberation Sans', sans-serif;color:#FFF;left:21.7px;transform-origin:0 0;transform:scaleX(1.0575);">Stav měřícího zařízení</div>
<div class="t" style="top:524.00px;font:12px/12px 'Liberation Sans', sans-serif;color:#000;left:22.8px;transform-origin:0 0;transform:scaleX(0.9031);">Hodnota ze zařízení</div>
<div style="left:130px;top:522px;width:59px;height:15px;background:#C0C0C0;border-right:1px solid #F8F8F0;border-bottom:1px solid #F8F8F0;box-sizing:border-box;"></div>
<div class="t" style="top:526.00px;font:10px/10px 'Liberation Serif', serif;color:#000;right:842px;transform-origin:100% 0;transform:scaleX(0.8999);text-shadow:0.3px 0 0 #000;">0.0000 mm</div>
<div class="t" style="top:525.00px;font:12px/12px 'Liberation Sans', sans-serif;color:#000;left:197.9px;transform-origin:0 0;transform:scaleX(0.8896);">Status komunikace</div>
<div style="left:296px;top:524px;width:25px;height:15px;background:#00F000;"></div>
<div class="t" style="top:527.00px;font:10px/10px 'Liberation Serif', serif;color:#000;left:308.5px;transform-origin:50% 0;transform:scaleX(0.8995);width:0;display:flex;justify-content:center;text-shadow:0.35px 0 0 #000;">OK</div>
<div class="t" style="top:544.00px;font:12px/12px 'Liberation Sans', sans-serif;color:#000;left:22.8px;transform-origin:0 0;transform:scaleX(0.905);">Měřená vzdálenost</div>
<div style="left:129px;top:543px;width:59px;height:15px;background:#C0C0C0;border-right:1px solid #F8F8F0;border-bottom:1px solid #F8F8F0;box-sizing:border-box;"></div>
<div class="t" style="top:546.00px;font:10px/10px 'Liberation Serif', serif;color:#000;right:843px;transform-origin:100% 0;transform:scaleX(0.8999);text-shadow:0.3px 0 0 #000;">0.0000 mm</div>
<div class="t" style="top:564.00px;font:12px/12px 'Liberation Sans', sans-serif;color:#000;left:22.8px;transform-origin:0 0;transform:scaleX(0.905);">Měření citlivost</div>
<div style="left:129px;top:563px;width:59px;height:15px;background:#C0C0C0;border-right:1px solid #F8F8F0;border-bottom:1px solid #F8F8F0;box-sizing:border-box;"></div>
<div class="t" style="top:567.00px;font:10px/10px 'Liberation Serif', serif;color:#000;right:842.5px;transform-origin:100% 0;transform:scaleX(0.9879);text-shadow:0.3px 0 0 #000;">0.00 %</div>
<div class="t" style="top:584.00px;font:12px/12px 'Liberation Sans', sans-serif;color:#000;left:22.8px;transform-origin:0 0;transform:scaleX(0.9057);">Komunikační řetězec</div>
<div style="left:130px;top:583px;width:174px;height:15px;background:#ECE9D8;border-top:1px solid #101010;border-left:1px solid #101010;border-right:1px solid #FFFFFF;border-bottom:1px solid #FFFFFF;box-sizing:border-box;box-shadow:inset 1px 1px 0 #C0C0B8;"></div>
<div class="t" style="top:604.00px;font:12px/12px 'Liberation Sans', sans-serif;color:#000;left:22.8px;transform-origin:0 0;transform:scaleX(0.8877);">Chyba komunikace</div>
<div style="left:130px;top:603px;width:174px;height:15px;background:#ECE9D8;border-top:1px solid #101010;border-left:1px solid #101010;border-right:1px solid #FFFFFF;border-bottom:1px solid #FFFFFF;box-sizing:border-box;box-shadow:inset 1px 1px 0 #C0C0B8;"></div>
<div style="left:342px;top:496px;width:274px;height:1px;background:#FFFFF0;"></div>
<div style="left:342px;top:497px;width:273px;height:49px;background:#ECE9D8;"></div>
<div style="left:342px;top:497px;width:273px;height:20px;background:#0000FF;"></div>
<div style="left:342px;top:517px;width:273px;height:1px;background:#E8E8F8;"></div>
<div class="t" style="top:501.00px;font:bold 12px/12px 'Liberation Sans', sans-serif;color:#FFF;left:348.7px;transform-origin:0 0;transform:scaleX(1.0177);">Ostatní nastavení</div>
<div class="t" style="top:525.00px;font:12px/12px 'Liberation Sans', sans-serif;color:#000;left:348.8px;transform-origin:0 0;transform:scaleX(0.905);">Zobrazit komunikace</div>
<div style="left:457px;top:523px;width:16px;height:16px;background:#FFF;border:1px solid #000;box-sizing:border-box;"></div>
<div style="left:15px;top:636px;width:601px;height:1px;background:#FFFFF0;"></div>
<div style="left:15px;top:637px;width:600px;height:67px;background:#ECE9D8;"></div>
<div style="left:15px;top:637px;width:600px;height:20px;background:#0000FF;"></div>
<div style="left:15px;top:657px;width:600px;height:1px;background:#E8E8F8;"></div>
<div class="t" style="top:641.00px;font:bold 12px/12px 'Liberation Sans', sans-serif;color:#FFF;left:21.7px;transform-origin:0 0;transform:scaleX(0.9661);">Stav komunikace s kamerovým systémem</div>
<div class="t" style="top:665.00px;font:12px/12px 'Liberation Sans', sans-serif;color:#000;left:22.7px;transform-origin:0 0;transform:scaleX(0.9057);">Komunikační řetězec</div>
<div style="left:131px;top:664px;width:347px;height:15px;background:#ECE9D8;border-top:1px solid #101010;border-left:1px solid #101010;border-right:1px solid #FFFFFF;border-bottom:1px solid #FFFFFF;box-sizing:border-box;box-shadow:inset 1px 1px 0 #C0C0B8;"></div>
<div class="t" style="top:685.00px;font:12px/12px 'Liberation Sans', sans-serif;color:#000;left:22.7px;transform-origin:0 0;transform:scaleX(0.8877);">Chyba komunikace</div>
<div style="left:131px;top:684px;width:347px;height:15px;background:#ECE9D8;border-top:1px solid #101010;border-left:1px solid #101010;border-right:1px solid #FFFFFF;border-bottom:1px solid #FFFFFF;box-sizing:border-box;box-shadow:inset 1px 1px 0 #C0C0B8;"></div>
<div class="t" style="top:666.00px;font:12px/12px 'Liberation Sans', sans-serif;color:#000;left:485.8px;transform-origin:0 0;transform:scaleX(0.8896);">Status komunikace</div>
<div style="left:584px;top:664px;width:25px;height:15px;background:#00F000;"></div>
<div class="t" style="top:667.00px;font:10px/10px 'Liberation Serif', serif;color:#000;left:596.5px;transform-origin:50% 0;transform:scaleX(0.8995);width:0;display:flex;justify-content:center;text-shadow:0.35px 0 0 #000;">OK</div>
</body></html>
